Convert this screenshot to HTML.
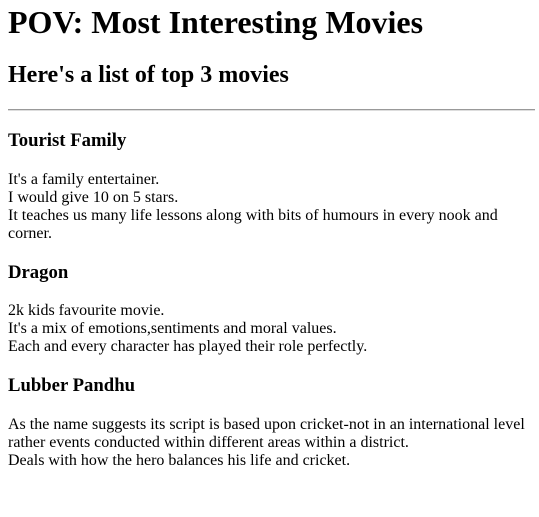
<!DOCTYPE html>
<html><head><meta charset="utf-8"><style>
html,body{margin:0;padding:0;background:#fff}
body{padding:4px 4px 0 8px;font-family:"Liberation Serif",serif;font-size:16px;color:#000}
h1{margin:0 0 21.44px;font-size:32px}
h2{font-size:24px;margin:19.92px 0}
h3{font-size:18.72px;margin:18.72px 0}
p{margin:16px 0}
hr{margin:8px 0;border:0;border-top:1px solid #999;border-bottom:1px solid #ddd}
</style></head><body>
<h1>POV: Most Interesting Movies</h1>
<h2>Here's a list of top 3 movies</h2>
<hr>
<h3>Tourist Family</h3>
<p>It's a family entertainer.<br>I would give 10 on 5 stars.<br>It teaches us many life lessons along with bits of humours in every nook and corner.</p>
<h3>Dragon</h3>
<p>2k kids favourite movie.<br>It's a mix of emotions,sentiments and moral values.<br>Each and every character has played their role perfectly.</p>
<h3>Lubber Pandhu</h3>
<p>As the name suggests its script is based upon cricket-not in an international level rather events conducted within different areas within a district.<br>Deals with how the hero balances his life and cricket.</p>
</body></html>
